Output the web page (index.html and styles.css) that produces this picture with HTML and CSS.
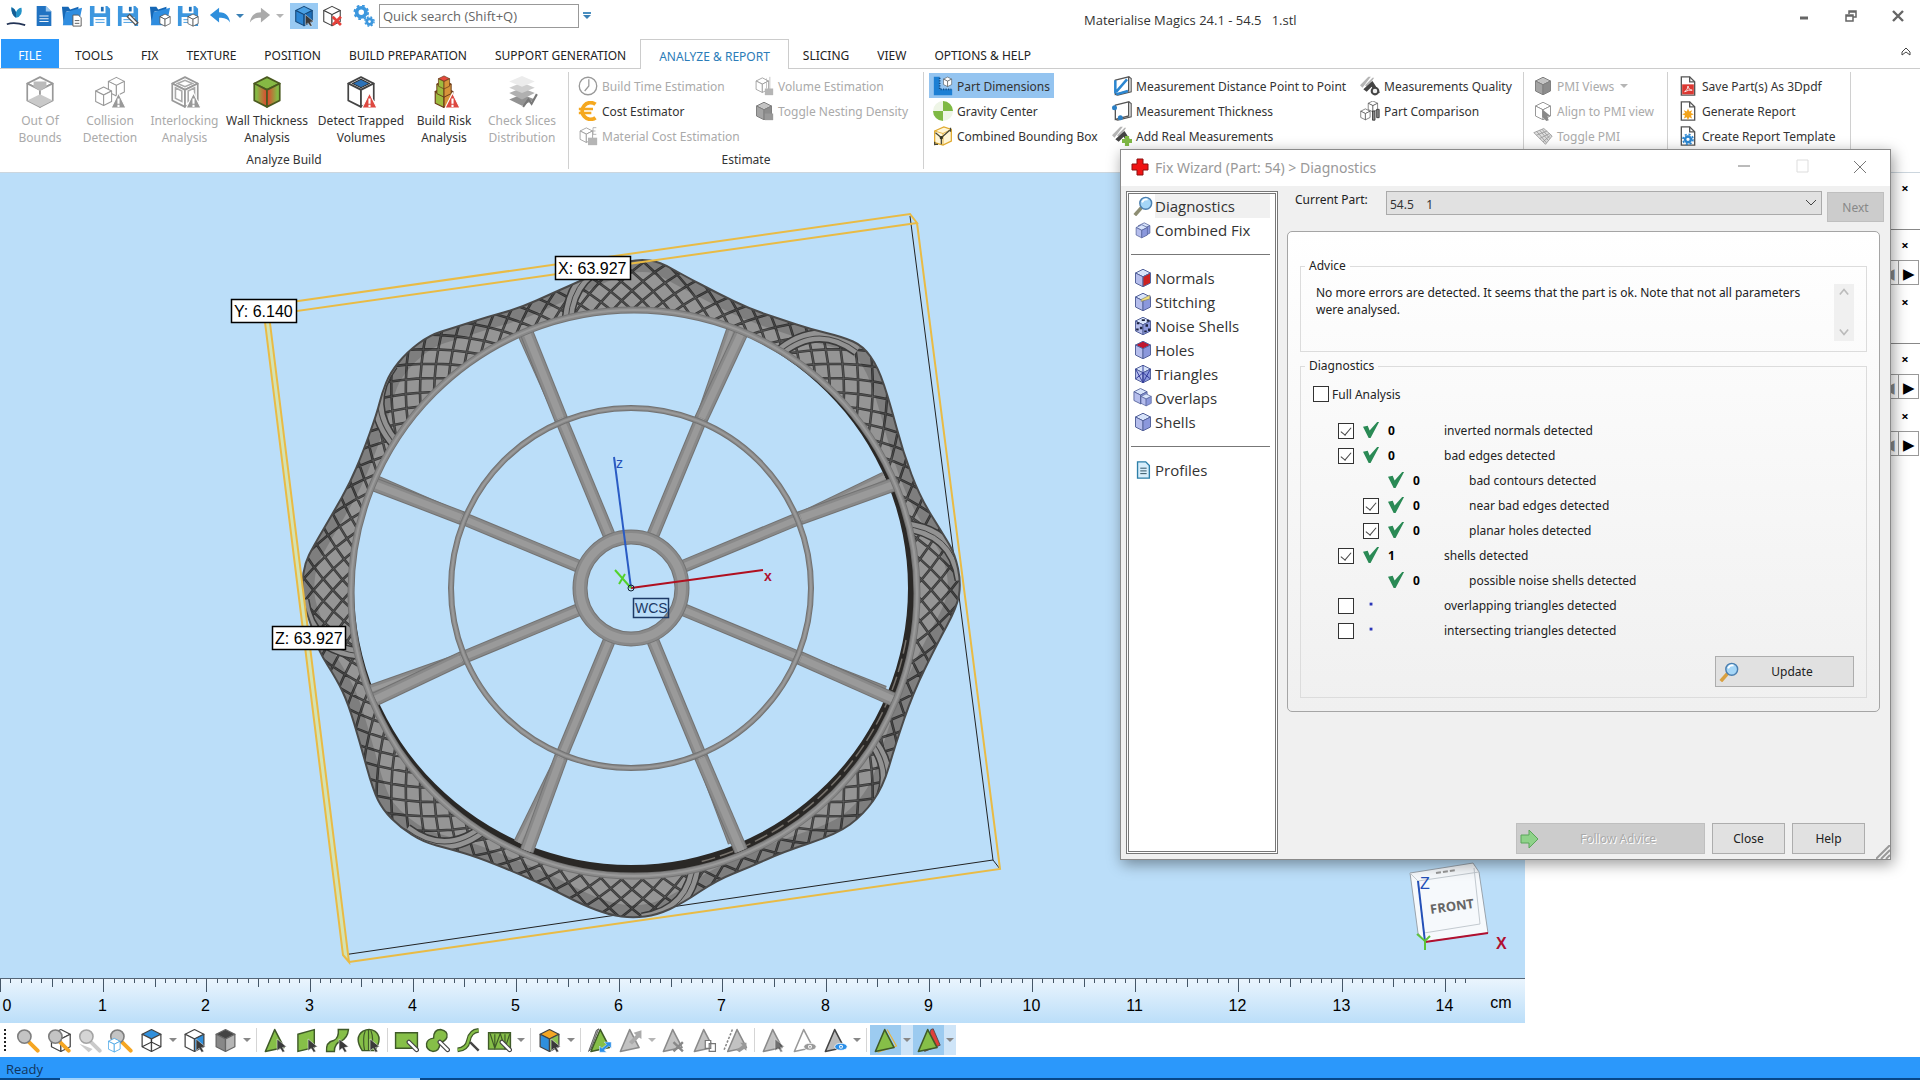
FILE: index.html
```html
<!DOCTYPE html>
<html lang="en">
<head>
    <meta charset="UTF-8">
    <meta name="viewport" content="width=device-width, initial-scale=1.0">
    <title>Materialise Magics 24.1 - 54.5 1.stl</title>
    <link rel="stylesheet" href="styles.css">
</head>
<body>
    <!-- Shared icons -->
    <svg class="defs" aria-hidden="true">
        <symbol id="cube" viewBox="0 0 32 32">
            <path class="ct" d="M16 2 28 8 16 14 4 8z"/><path class="cl" d="M4 8 16 14V30L4 24z"/><path class="cr" d="M28 8 16 14V30L28 24z"/>
        </symbol>
        <symbol id="warn" viewBox="0 0 32 32"><path d="M24 17 31 31H17z" fill="currentColor" stroke="#fff" stroke-width="1"/><path d="M24 22v5M24 28v2" stroke="#fff" stroke-width="2"/></symbol>
        <symbol id="pointer" viewBox="0 0 32 32"><path d="M18 14 30 24 25 25 28 30 25 31 22 26 18 29z" fill="#3a3a3a" stroke="#fff" stroke-width=".6"/></symbol>
        <symbol id="pen" viewBox="0 0 32 32"><path d="M19 18 29 28" stroke="#444" stroke-width="6" stroke-linecap="round"/><path d="M19 18 29 28" stroke="#fff" stroke-width="3" stroke-linecap="round"/></symbol>
        <symbol id="lens" viewBox="0 0 32 32"><path d="M17 17 29 29" stroke="var(--h,#f5a623)" stroke-width="5" stroke-linecap="round"/><circle cx="12" cy="11" r="8.5" fill="#c4c4c4" stroke="#7d7d7d" stroke-width="2"/></symbol>
        <symbol id="doc" viewBox="0 0 24 24"><path d="M4 1h10l6 6v16H4z" fill="#2173c2"/><path d="M14 1v6h6z" fill="#9cc8ee"/><path d="M7 12h10M7 15h10M7 18h10" stroke="#fff" stroke-width="1"/></symbol>
        <symbol id="folder" viewBox="0 0 24 24"><path d="M1 2h7l2 3 9-3v5H6L3 22z" fill="#1667b5"/><path d="M5 8 23 3 19 22H2z" fill="#2f8de0"/></symbol>
        <symbol id="save" viewBox="0 0 24 24"><path d="M1 1h19l3 3v19H1z" fill="#3d97df"/><path d="M6 1h12v8H6zM5 13h14v10H5z" fill="#fff"/><path d="M13 2h3v5h-3z" fill="#1f6db5"/><path d="M7 16h10M7 19h10" stroke="#3d97df"/></symbol>
        <symbol id="arrow" viewBox="0 0 24 24"><path d="M1 11 11 3v5c8 0 11 5 12 11-3-4-6-5-12-5v5z" fill="currentColor"/></symbol>
        <symbol id="gears" viewBox="0 0 24 24"><circle cx="9" cy="8" r="5" fill="none" stroke="#3c97de" stroke-width="4"/><circle cx="9" cy="8" r="7.5" fill="none" stroke="#3c97de" stroke-width="2" stroke-dasharray="3 3"/><circle cx="18" cy="18" r="3" fill="none" stroke="#3c97de" stroke-width="3"/><circle cx="18" cy="18" r="5" fill="none" stroke="#3c97de" stroke-width="1.5" stroke-dasharray="2 2"/></symbol>
        <symbol id="report" viewBox="0 0 24 24"><path d="M4 1h10l6 6v16H4z" fill="#fff" stroke="#555" stroke-width="1.6"/><path d="M14 1v6h6" fill="none" stroke="#555" stroke-width="1.6"/></symbol>
        <symbol id="caliper" viewBox="0 0 24 24"><path d="M0 11 10 1h3L3 14zM6 11 15 2h2l-8 12z" fill="#b5b5b5"/><path d="M4 16 15 6l9 14h-6l-4-7-6 6z" fill="#444"/></symbol>
        <symbol id="plate" viewBox="0 0 24 24"><path d="M4 5 20 1v17L4 22z" fill="#fff" stroke="#555" stroke-width="1.6"/><path d="M20 1l3 2v16l-16 4-3-1" fill="none" stroke="#555" stroke-width="1.4"/></symbol>
        <symbol id="tick" viewBox="0 0 18 18"><path d="M0 5 5 4 7 9 15 0h2L8 17H6z" fill="#2a8a55"/></symbol>
        <symbol id="glass" viewBox="0 0 22 22"><path d="M10 12 2 21" stroke="var(--h,#8d8d72)" stroke-width="4"/><circle cx="14" cy="8" r="6.5" fill="#a5d6f7" stroke="#4b7fb0" stroke-width="1.6"/><path d="M10 7q2-4 6-3" stroke="#fff" stroke-width="2" fill="none"/></symbol>
        <symbol id="tri" viewBox="0 0 32 32"><path d="M15 2 27 25 3 30z" fill="var(--f,#86bf48)" stroke="var(--s,#3f5a28)" stroke-width="2" stroke-linejoin="round"/></symbol>
        <symbol id="eye" viewBox="0 0 32 32"><ellipse cx="23" cy="24" rx="8" ry="4.5" fill="currentColor" stroke="#fff"/><circle cx="23" cy="24" r="2.5" fill="#fff"/><circle cx="23" cy="24" r="1.2" fill="currentColor"/></symbol>
    </svg>

    <header class="titlebar">
        <div class="quick">
            <button class="q" aria-label="Magics"><svg viewBox="0 0 24 24"><path d="M7 2q-1 8 5 12 8-2 6-11-4 0-6 5-1-4-5-6z" fill="#2493c8"/><path d="M7 3q0 8 5 11V8q-1-4-5-5z" fill="#155d94"/><path d="M2 21q8-3 20 1" stroke="#235" stroke-width="2" fill="none"/></svg></button>
            <button class="q" aria-label="New"><svg><use href="#doc"/></svg></button>
            <button class="q" aria-label="Open"><svg viewBox="0 0 24 24"><use href="#folder"/><path d="M13 11h6l3 3v9h-9z" fill="#fff" stroke="#555"/><path d="M15 17h5M15 20h5" stroke="#555"/></svg></button>
            <button class="q" aria-label="Save"><svg><use href="#save"/></svg></button>
            <button class="q" aria-label="Save as"><svg viewBox="0 0 24 24"><use href="#save"/><path d="m12 11 10 10" stroke="#555" stroke-width="5"/><path d="m13 12 8 8" stroke="#fff" stroke-width="2"/></svg></button>
            <i class="sep"></i>
            <button class="q" aria-label="Load part"><svg viewBox="0 0 24 24"><use href="#folder"/><use href="#cube" class="wire" x="10" y="9" width="15" height="15"/></svg></button>
            <button class="q" aria-label="Save part"><svg viewBox="0 0 24 24"><use href="#save"/><use href="#cube" class="wire" x="10" y="9" width="15" height="15"/></svg></button>
            <i class="sep"></i>
            <button class="q undo" aria-label="Undo"><svg><use href="#arrow"/></svg></button><i class="caret blue"></i>
            <button class="q redo" aria-label="Redo"><svg class="flip"><use href="#arrow"/></svg></button><i class="caret pale"></i>
            <i class="sep"></i>
            <button class="q on" aria-label="Select parts"><svg class="solid-blue" viewBox="0 0 32 32"><use href="#cube"/><use href="#pointer"/></svg></button>
            <button class="q" aria-label="Unload part"><svg class="wire" viewBox="0 0 32 32"><use href="#cube"/><path d="m17 17 12 12M29 17 17 29" stroke="#e5413a" stroke-width="4"/></svg></button>
            <i class="sep"></i>
            <button class="q" aria-label="Settings"><svg><use href="#gears"/></svg></button>
            <input class="search" type="text" placeholder="Quick search (Shift+Q)" aria-label="Quick search">
            <button class="more" aria-label="Customize"><i class="caret blue"></i></button>
        </div>
        <h1 class="title">Materialise Magics 24.1 - 54.5 &nbsp; 1.stl</h1>
        <div class="winbtns">
            <button aria-label="Minimize"><svg viewBox="0 0 16 16"><path d="M4 10h8" stroke-width="3"/></svg></button>
            <button aria-label="Restore"><svg viewBox="0 0 16 16"><path d="M3 7h7v6H3zM3 8h7M6 6V3h7v6h-3M6 4h7" stroke-width="1.5" fill="none"/></svg></button>
            <button aria-label="Close window"><svg viewBox="0 0 16 16"><path d="m3 3 10 10M13 3 3 13" stroke-width="2.4"/></svg></button>
        </div>
    </header>

    <nav class="tabs">
        <button class="tab file">FILE</button>
        <button class="tab">TOOLS</button>
        <button class="tab">FIX</button>
        <button class="tab">TEXTURE</button>
        <button class="tab">POSITION</button>
        <button class="tab">BUILD PREPARATION</button>
        <button class="tab">SUPPORT GENERATION</button>
        <button class="tab active">ANALYZE &amp; REPORT</button>
        <button class="tab">SLICING</button>
        <button class="tab">VIEW</button>
        <button class="tab">OPTIONS &amp; HELP</button>
        <button class="collapse" aria-label="Collapse ribbon"><svg viewBox="0 0 12 12"><path d="M2 9V6l4-4 4 4v3L6 6z" fill="none" stroke="#444"/></svg></button>
    </nav>

    <section class="ribbon">
        <div class="group build">
            <div class="bigs">
                <button class="big" disabled><svg class="wire dim" viewBox="0 0 32 32"><use href="#cube"/><path d="M16 18 28 24 16 30 4 24z" fill="#c9c9c9"/><path d="M10 6h12v5l-6 4-6-4z" fill="#bbb"/></svg><span>Out Of<br>Bounds</span></button>
                <button class="big" disabled><svg class="wire dim" viewBox="0 0 32 32"><use href="#cube" x="12" y="0" width="20" height="22"/><use href="#cube" x="0" y="9" width="20" height="22"/><use href="#warn" color="#999"/></svg><span>Collision<br>Detection</span></button>
                <button class="big" disabled><svg class="wire dim" viewBox="0 0 32 32"><use href="#cube"/><path d="M7 12l6 3v10l-6-3zM25 12l-6 3v10l6-3zM9 8l7-3 7 3-7 3z" fill="none" stroke="#aaa" stroke-width="1.5"/><use href="#warn" color="#999"/></svg><span>Interlocking<br>Analysis</span></button>
                <button class="big"><svg class="heat" viewBox="0 0 32 32">
                    <defs>
                        <linearGradient id="hl" x1="0" x2="1"><stop offset=".2" stop-color="#86b944"/><stop offset="1" stop-color="#e0442f"/></linearGradient>
                        <linearGradient id="hr" x1="1" x2="0"><stop offset=".2" stop-color="#86b944"/><stop offset="1" stop-color="#e0442f"/></linearGradient>
                    </defs>
                    <use href="#cube"/></svg><span>Wall Thickness<br>Analysis</span></button>
                <button class="big"><svg class="wire" viewBox="0 0 32 32"><use href="#cube"/><path d="M16 4 24 8 16 12 8 8z" fill="#2c72b8" stroke="#333"/><use href="#warn" color="#dd4840"/></svg><span>Detect Trapped<br>Volumes</span></button>
                <button class="big"><svg class="risk" viewBox="0 0 32 32"><use href="#cube" x="2" y="10" width="28" height="22"/><use href="#cube" x="6" y="4" width="20" height="18"/><use href="#cube" class="redtop" x="9" y="0" width="14" height="14"/><use href="#warn" color="#dd4840"/></svg><span>Build Risk<br>Analysis</span></button>
                <button class="big" disabled><svg viewBox="0 0 32 32"><path d="m4 23 12-5 12 5-12 6z" fill="#929292"/><path d="m4 17 12-5 12 5-12 6z" fill="#b0b0b0"/><path d="m4 12 12-5 12 5-12 5z" fill="#cfcfcf"/><path d="m4 6 12-5 12 5-12 5z" fill="#ececec"/><path d="m17 30 5-7 3 4 5-9" stroke="#777" stroke-width="2" fill="none"/></svg><span>Check Slices<br>Distribution</span></button>
            </div>
            <div class="caption">Analyze Build</div>
        </div>
        <div class="group estimate">
            <div class="smalls">
                <button class="small" disabled><svg viewBox="0 0 24 24"><circle cx="12" cy="12" r="10.5" fill="#fff" stroke="#999" stroke-width="1.6"/><path d="M13 4v8l-5 6" stroke="#999" stroke-width="1.5" fill="none"/></svg>Build Time Estimation</button>
                <button class="small" disabled><svg class="wire dim" viewBox="0 0 24 24"><use href="#cube" width="20" height="22"/><path d="M15 3v12M19 1v16" stroke="#bbb"/><path d="M13 15h10v8H13z" fill="#b5b5b5"/></svg>Volume Estimation</button>
                <button class="small"><svg viewBox="0 0 24 24"><path d="M21 4A10 10 0 1 0 21 20" fill="none" stroke="#f5a81f" stroke-width="4.5"/><path d="M1 9.500h17M1 14.500h15" stroke="#f5a81f" stroke-width="3"/></svg>Cost Estimator</button>
                <button class="small" disabled><svg class="grey" viewBox="0 0 24 24"><use href="#cube"/><path d="M13 15h10v8H13z" fill="#999"/></svg>Toggle Nesting Density</button>
                <button class="small" disabled><svg class="wire dim" viewBox="0 0 24 24"><use href="#cube" width="20" height="22"/><path d="M22 2h-4v8h4M16 6h5" fill="none" stroke="#aaa"/><path d="M12 14h11v9H12z" fill="#b5b5b5"/></svg>Material Cost Estimation</button>
            </div>
            <div class="caption">Estimate</div>
        </div>
        <div class="group measure">
            <div class="smalls">
                <button class="small on"><svg viewBox="0 0 24 24"><path d="M1 1h7v15h15v7H1z" fill="#1c7fd4"/><path d="M8 2v14h14" fill="none" stroke="#124e88" stroke-width="2" stroke-dasharray="1.500 1.500"/><use href="#cube" class="wire" x="11" y="0" width="13" height="14"/></svg>Part Dimensions</button>
                <button class="small"><svg viewBox="0 0 24 24"><use href="#plate"/><path d="M5 19 18 4M4 21V5M5 22 19 18" stroke="#2b86d0" stroke-width="3"/></svg>Measurement Distance Point to Point</button>
                <button class="small"><svg viewBox="0 0 24 24"><use href="#caliper"/><circle cx="18" cy="18" r="4" fill="#eee" stroke="#444" stroke-width="2.500"/></svg>Measurements Quality</button>
                <button class="small"><svg viewBox="0 0 24 24"><path d="M12 12V0A12 12 0 0 1 24 12zM12 12v12A12 12 0 0 1 0 12z" fill="#7fb944"/><path d="M12 12H0A12 12 0 0 1 12 0zM12 12h12a12 12 0 0 1-12 12z" fill="#eef5e6"/></svg>Gravity Center</button>
                <button class="small"><svg viewBox="0 0 24 24"><use href="#plate"/><circle cx="3" cy="8" r="3" fill="#2b7fc4"/><circle cx="10" cy="20" r="3" fill="#2b7fc4"/></svg>Measurement Thickness</button>
                <button class="small"><svg class="wire" viewBox="0 0 24 24"><use href="#cube" x="8" y="-1" width="15" height="15"/><use href="#cube" x="-1" y="8" width="15" height="16"/><path d="M15 12h3v11h-3zM20 10h3v10h-3z" fill="#888" stroke="#333"/></svg>Part Comparison</button>
                <button class="small"><svg viewBox="0 0 24 24"><path d="M2 6 13 1l9 3v14l-10 5-10-3z" fill="#fff6d8" stroke="#e0a92e" stroke-width="1.500"/><path d="M2 6l10 3 10-5M12 9v14" stroke="#e0a92e" fill="none"/><path d="M2 22h4M2 23v-4M3 8l7 6 10-9M10 14v8M21 2v5" stroke="#443" fill="none" stroke-width="1.500"/><circle cx="10" cy="14" r="2" fill="#332"/></svg>Combined Bounding Box</button>
                <button class="small"><svg viewBox="0 0 24 24"><use href="#caliper"/><path d="M18 12v12M12 18h12" stroke="#7fb944" stroke-width="5"/></svg>Add Real Measurements</button>
            </div>
        </div>
        <div class="group pmi">
            <div class="smalls">
                <button class="small" disabled><svg class="grey" viewBox="0 0 24 24"><use href="#cube"/></svg>PMI Views <i class="caret pale"></i></button>
                <button class="small" disabled><svg class="wire dim" viewBox="0 0 24 24"><use href="#cube"/><path d="M11 10 21 18l-4 1 2 4-3 1-5-5z" fill="#888"/></svg>Align to PMI view</button>
                <button class="small" disabled><svg viewBox="0 0 24 24"><path d="m1 8 12-5 10 9-8 10z" fill="#ddd" stroke="#999"/><path d="m4 6 12 14M8 5l10 12M11 4l9 11M4 11l13-5M8 15l12-6M12 19l9-8" stroke="#999"/></svg>Toggle PMI</button>
            </div>
        </div>
        <div class="group report">
            <div class="smalls">
                <button class="small"><svg viewBox="0 0 24 24"><use href="#report"/><path d="M5 10h14v12H5z" fill="#dc3832"/><path d="M8 19q4-3 4-7 1 5 5 5-4-1-9 2" stroke="#fff" fill="none"/></svg>Save Part(s) As 3Dpdf</button>
                <button class="small"><svg viewBox="0 0 24 24"><use href="#report"/><path d="m12 9 1.500 3.500L17 11l-1.500 3.500L19 16l-3.500 1.500L17 21l-3.500-1.500L12 23l-1.500-3.500L7 21l1.500-3.500L5 16l3.500-1.500L7 11l3.500 1.500z" fill="#f3a41c"/></svg>Generate Report</button>
                <button class="small"><svg viewBox="0 0 24 24"><use href="#report"/><circle cx="12" cy="16" r="3.500" fill="none" stroke="#2b86d0" stroke-width="3"/><circle cx="12" cy="16" r="6" fill="none" stroke="#2b86d0" stroke-width="2" stroke-dasharray="2.500 2.200"/></svg>Create Report Template</button>
            </div>
        </div>
    </section>

    <main class="workspace">
        <div class="stage">
            <svg class="view" viewBox="0 173 1525 805" preserveAspectRatio="xMinYMin meet" role="img" aria-label="Part view">
                <defs><clipPath id="rimClip"><path id="rimShape"/></clipPath></defs>
                <path d="M910 216 993 860 343 955M993 860 1000 869" class="hair"/>
                <!-- wheel, filled in by script.js -->
                <g id="wall"></g>
                <g id="spokes"></g>
                <g id="wheel"></g>
                <path d="M263 306 269 315 349 962 343 955z" class="band"/>
                <path d="M263 306 910 214 917 223 269 315zM263 306 343 955 349 962 269 315M917 223 1000 869 349 962" class="bbox"/>
                <path d="M631 588 614 457" stroke="#2a5bc4" stroke-width="2"/>
                <path d="M631 588 763 570" stroke="#b01020" stroke-width="2"/>
                <path d="M631 588 615 570M619 584l6-10" stroke="#52d22c" stroke-width="2"/>
                <circle cx="631" cy="588" r="3" fill="none" stroke="#123"/>
                <text x="616" y="468" class="axis z">z</text>
                <text x="764" y="581" class="axis x">x</text>
                <rect x="633.5" y="598.5" width="35" height="19" class="wcsbox"/>
                <text x="635" y="613" class="axis wcs">WCS</text>
                <rect x="555.500" y="256.500" width="75" height="23" class="tag"/><text x="558" y="274" class="dim-text">X: 63.927</text>
                <rect x="231.500" y="299.500" width="65" height="23" class="tag"/><text x="234" y="317" class="dim-text">Y: 6.140</text>
                <rect x="272.500" y="626.500" width="73" height="23" class="tag"/><text x="275" y="644" class="dim-text">Z: 63.927</text>
                <!-- orientation cube -->
                <path d="M1410 873 1473 863 1479 872 1488 933 1425 942 1418 933z" fill="#f6f9fc" stroke="#9aa4ad"/>
                <path d="M1410 873 1418 881 1479 872M1418 881l7 61M1424 933l56-9-6-56" fill="none" stroke="#c3cad0"/>
                <path d="M1436 873l20-3" stroke="#999" stroke-width="2" stroke-dasharray="5 2"/>
                <path d="M1418 881 1425 942" stroke="#2450b8" stroke-width="2"/><path d="M1425 942 1488 933" stroke="#b01030" stroke-width="2"/><path d="M1417 934l8 7 5-5M1425 941v9" stroke="#5cc43a" stroke-width="2" fill="none"/>
                <text x="1452" y="911" class="face" transform="rotate(-8 1452 906)">FRONT</text>
                <text x="1420" y="889" class="nav z">Z</text><text x="1496" y="949" class="nav x">X</text>
            </svg>
            <div class="ruler"><svg id="ruler"></svg></div>
        </div>
        <aside class="dock">
            <div class="pane line"><button class="x" aria-label="Close pane">×</button></div>
            <div class="pane"><button class="x" aria-label="Close pane">×</button><div class="scroll"><button disabled aria-label="Previous">◀</button><button aria-label="Next tab">▶</button></div></div>
            <div class="pane line"><button class="x" aria-label="Close pane">×</button></div>
            <div class="pane"><button class="x" aria-label="Close pane">×</button><div class="scroll"><button disabled aria-label="Previous">◀</button><button aria-label="Next tab">▶</button></div></div>
            <div class="pane"><button class="x" aria-label="Close pane">×</button><div class="scroll"><button disabled aria-label="Previous">◀</button><button aria-label="Next tab">▶</button></div></div>
        </aside>
    </main>

    <footer class="marks">
        <i class="grip-dots"></i>
        <button class="m" aria-label="Zoom"><svg><use href="#lens"/></svg></button>
        <button class="m" aria-label="Zoom part"><svg class="wire" viewBox="0 0 32 32"><use href="#cube" x="3"/><use href="#lens"/></svg></button>
        <button class="m" aria-label="Zoom previous"><svg class="nohandle" viewBox="0 0 32 32"><path d="M3 20l12 11 5-4" fill="#ccc"/><use href="#lens" opacity=".7"/></svg></button>
        <button class="m" aria-label="Zoom selection"><svg viewBox="0 0 32 32"><use href="#lens"/><use href="#cube" class="wire sky" x="-2" y="12" width="20" height="20"/></svg></button>
        <button class="m" aria-label="Views"><svg class="wire bluetop" viewBox="0 0 32 32"><use href="#cube"/><path d="M4 24 16 18 28 24M16 14v4" stroke="#333" fill="none" stroke-width="1.500"/></svg></button><i class="caret"></i>
        <button class="m" aria-label="Pick face"><svg class="wire blueright" viewBox="0 0 32 32"><use href="#cube"/><use href="#pointer"/></svg></button>
        <button class="m" aria-label="Shading"><svg class="shade" viewBox="0 0 32 32"><use href="#cube"/></svg></button><i class="caret"></i>
        <i class="sep"></i>
        <button class="m" aria-label="Mark triangle"><svg viewBox="0 0 32 32"><use href="#tri"/><use href="#pointer"/></svg></button>
        <button class="m" aria-label="Mark plane"><svg viewBox="0 0 32 32"><path d="M5 8 26 2v23L5 30z" class="leaf"/><use href="#pointer"/></svg></button>
        <button class="m" aria-label="Mark surface"><svg viewBox="0 0 32 32"><path d="M2 30q-1-12 9-14 7-3 6-14h13q-1 11-10 15-8 3-8 13z" class="leaf"/><use href="#pointer"/></svg></button>
        <button class="m" aria-label="Mark shell"><svg viewBox="0 0 32 32"><path d="M8 29Q-3 12 9 4q8-4 15 0 11 8 0 25z" class="leaf"/><path d="M11 29q-3-16 1-26M20 29q3-16-1-26M16 2v27" stroke="#3f5a28" fill="none" stroke-width="1.500"/><use href="#pointer"/></svg></button>
        <i class="sep"></i>
        <button class="m" aria-label="Rectangle"><svg viewBox="0 0 32 32"><path d="M2 6h28v20H2z" class="leaf"/><use href="#pen"/></svg></button>
        <button class="m" aria-label="Free form"><svg viewBox="0 0 32 32"><path d="M11 13Q11 2 20 2q10 2 8 10-2 5-9 7 0 11-9 11-9-2-8-10 1-6 9-7z" class="leaf"/><use href="#pen"/></svg></button>
        <button class="m" aria-label="Brush"><svg viewBox="0 0 32 32"><path d="M2 28q12-1 14-12Q18 4 29 3" stroke="#3f5a28" stroke-width="6" fill="none"/><path d="M2 28q12-1 14-12Q18 4 29 3" stroke="#86bf48" stroke-width="3" fill="none"/><path d="m18 18 11 11" stroke="#444" stroke-width="3"/></svg></button>
        <button class="m" aria-label="Strip"><svg viewBox="0 0 32 32"><path d="M2 6h28v21H2z" class="leaf"/><path d="M4 7l6 19 7-19 6 19 6-18M10 26V8M23 8v18" stroke="#3f5a28" stroke-width="1.500" fill="none"/><use href="#pen"/></svg></button><i class="caret"></i>
        <i class="sep"></i>
        <button class="m" aria-label="Color part"><svg class="tricolor" viewBox="0 0 32 32"><use href="#cube"/><use href="#pointer"/></svg></button><i class="caret"></i>
        <i class="sep"></i>
        <button class="m" aria-label="Flip marked"><svg viewBox="0 0 32 32"><path d="M12 3 15 1 5 27l-3 3z" fill="#aaa" stroke="#444"/><use href="#tri" x="2"/><path d="M16 31v-8l3 3 6-5-3-3h9v8l-3-3-6 5 3 3z" fill="#2b8fe8" stroke="#fff" stroke-width=".6"/></svg></button>
        <button class="m" aria-label="Flip"><svg class="tri-grey" viewBox="0 0 32 32"><use href="#tri"/><path d="m14 18 9-9-3-3 10-3v11l-3-2-9 9z" fill="#aaa"/></svg></button><i class="caret pale"></i>
        <button class="m" aria-label="Delete marked"><svg class="tri-grey" viewBox="0 0 32 32"><use href="#tri"/><path d="m16 18 12 12M28 18 16 30" stroke="#888" stroke-width="3"/></svg></button>
        <button class="m" aria-label="Copy marked"><svg class="tri-grey" viewBox="0 0 32 32"><use href="#tri"/><path d="M17 16h7v10h-7zM22 20h8v10h-8z" fill="#fff" stroke="#777" stroke-width="1.500"/></svg></button>
        <button class="m" aria-label="Separate marked"><svg class="tri-grey" viewBox="0 0 32 32"><path d="M12 2 1 29" stroke="#888" stroke-dasharray="3 2" stroke-width="2"/><use href="#tri" x="3"/><path d="m17 28 8-6-3-3h8v10l-3-2-6 4z" fill="#999"/></svg></button>
        <i class="sep"></i>
        <button class="m" aria-label="Pick triangle"><svg class="tri-grey" viewBox="0 0 32 32"><use href="#tri"/><use href="#pointer" opacity=".6"/></svg></button>
        <button class="m" aria-label="Show"><svg class="tri-white" viewBox="0 0 32 32"><use href="#tri"/><use href="#eye" color="#999"/></svg></button>
        <button class="m" aria-label="Show marked"><svg class="tri-dark" viewBox="0 0 32 32"><use href="#tri"/><use href="#eye" color="#2b8fe8"/></svg></button><i class="caret"></i>
        <i class="sep"></i>
        <button class="m on" aria-label="Highlight marked"><svg viewBox="0 0 32 32"><path d="M18 2 30 23 6 31" fill="none" stroke="#e8b33a" stroke-width="1.500"/><use href="#tri"/></svg></button><i class="caret lit"></i>
        <button class="m on" aria-label="Highlight back"><svg viewBox="0 0 32 32"><path d="M19 2l3-1 9 21-20 8z" fill="#e0403a" stroke="#444"/><use href="#tri"/></svg></button><i class="caret lit"></i>
    </footer>
    <div class="status">Ready</div>
    <div class="strip"><i></i></div>

    <section class="dialog" role="dialog" aria-label="Fix Wizard">
        <div class="dlg-title">
            <svg viewBox="0 0 18 18"><path d="M6 1h6v5h5v6h-5v5H6v-5H1V6h5z" fill="#f01414" stroke="#8c1010"/></svg>
            <h2>Fix Wizard (Part: 54) &gt; Diagnostics</h2>
            <button aria-label="Minimize dialog"><svg viewBox="0 0 16 16"><path d="M2 7h12"/></svg></button>
            <button disabled aria-label="Maximize dialog"><svg viewBox="0 0 16 16"><path d="M3 1h11v12H3z"/></svg></button>
            <button aria-label="Close dialog"><svg viewBox="0 0 16 16"><path d="m2 2 12 12M14 2 2 14"/></svg></button>
        </div>
        <div class="dlg-body">
            <nav class="pages">
                <a href="#" class="page sel"><svg viewBox="0 0 22 22"><use href="#glass"/></svg><span>Diagnostics</span></a>
                <a href="#" class="page"><svg class="lilac" viewBox="0 0 32 32"><use href="#cube" x="6" y="2" width="24" height="26"/><use href="#cube" x="2" y="5" width="24" height="26"/></svg><span>Combined Fix</span></a>
                <hr>
                <a href="#" class="page"><svg class="lilac redface" viewBox="0 0 32 32"><use href="#cube"/></svg><span>Normals</span></a>
                <a href="#" class="page"><svg class="lilac" viewBox="0 0 32 32"><use href="#cube"/><path d="M13 12 27 5v6l-14 4z" fill="#f5e27a" stroke="#776"/></svg><span>Stitching</span></a>
                <a href="#" class="page"><svg class="lilac" viewBox="0 0 32 32"><use href="#cube"/><path d="M6 10h4v3H6zM11 17h4v4h-4zM5 20h4v3H5zM14 5h5v3h-5zM20 13h4v4h-4zM24 20h4v4h-4zM18 23h4v3h-4zM22 6h4v3h-4z" fill="#1c2340"/></svg><span>Noise Shells</span></a>
                <a href="#" class="page"><svg class="lilac redroof" viewBox="0 0 32 32"><use href="#cube"/></svg><span>Holes</span></a>
                <a href="#" class="page"><svg class="lilac" viewBox="0 0 32 32"><use href="#cube"/><path d="M4 8 16 30 28 8M16 2v28M4 24 16 14M16 14 28 24" stroke="#30389a" fill="none" stroke-width="1.500"/></svg><span>Triangles</span></a>
                <a href="#" class="page"><svg class="lilac" viewBox="0 0 32 32"><use href="#cube" x="-2" y="-2" width="28" height="30"/><use href="#cube" x="10" y="6" width="22" height="26"/></svg><span>Overlaps</span></a>
                <a href="#" class="page"><svg class="lilac" viewBox="0 0 32 32"><use href="#cube"/></svg><span>Shells</span></a>
                <hr>
                <a href="#" class="page"><svg viewBox="0 0 22 22"><path d="M5 2h9l4 4v14H5z" fill="#d8eefb" stroke="#2d7fa8" stroke-width="1.500"/><path d="M8 9h7M8 12h7M8 15h7" stroke="#245" /></svg><span>Profiles</span></a>
            </nav>
            <div class="content">
                <div class="part-row">
                    <label for="part">Current Part:</label>
                    <div class="select"><select id="part"><option>54.5 &nbsp;&nbsp; 1</option></select><svg viewBox="0 0 12 12"><path d="m1 3 5 5 5-5"/></svg></div>
                    <button class="btn next" disabled>Next</button>
                </div>
                <div class="card">
                    <fieldset class="advice">
                        <legend>Advice</legend>
                        <p>No more errors are detected. It seems that the part is ok. Note that not all parameters were analysed.</p>
                        <div class="bar"><button disabled aria-label="Scroll up"><svg viewBox="0 0 12 12"><path d="m1 9 5-6 5 6"/></svg></button><button disabled aria-label="Scroll down"><svg viewBox="0 0 12 12"><path d="m1 3 5 6 5-6"/></svg></button></div>
                    </fieldset>
                    <fieldset class="diag">
                        <legend>Diagnostics</legend>
                        <label class="full"><input type="checkbox">Full Analysis</label>
                        <label class="row"><input type="checkbox" checked><svg><use href="#tick"/></svg><b>0</b>inverted normals detected</label>
                        <label class="row"><input type="checkbox" checked><svg><use href="#tick"/></svg><b>0</b>bad edges detected</label>
                        <div class="row sub"><i></i><svg><use href="#tick"/></svg><b>0</b>bad contours detected</div>
                        <label class="row sub"><input type="checkbox" checked><svg><use href="#tick"/></svg><b>0</b>near bad edges detected</label>
                        <label class="row sub"><input type="checkbox" checked><svg><use href="#tick"/></svg><b>0</b>planar holes detected</label>
                        <label class="row"><input type="checkbox" checked><svg><use href="#tick"/></svg><b>1</b>shells detected</label>
                        <div class="row sub"><i></i><svg><use href="#tick"/></svg><b>0</b>possible noise shells detected</div>
                        <label class="row"><input type="checkbox"><svg viewBox="0 0 18 18"><path d="M7 6h3v3H7z" fill="#2a35b8"/></svg><b></b>overlapping triangles detected</label>
                        <label class="row"><input type="checkbox"><svg viewBox="0 0 18 18"><path d="M7 6h3v3H7z" fill="#2a35b8"/></svg><b></b>intersecting triangles detected</label>
                        <button class="btn update"><svg viewBox="0 0 22 22"><use href="#glass"/></svg><span>Update</span></button>
                    </fieldset>
                </div>
                <div class="actions">
                    <button class="btn follow" disabled><svg viewBox="0 0 20 20"><path d="M1 6h8V1l9 9-9 9v-5H1z" fill="#8fd28a" stroke="#5ba65a"/></svg><span>Follow Advice</span></button>
                    <button class="btn">Close</button>
                    <button class="btn">Help</button>
                </div>
            </div>
        </div>
        <svg class="grip" viewBox="0 0 14 14"><path d="M0 14 14 0M5 14l9-9M10 14l4-4" stroke="#999" stroke-width="2"/></svg>
    </section>

    <script src="script.js"></script>
</body>
</html>
```

FILE: styles.css
```css
* {
    box-sizing: border-box;
}

body {
    margin: 0;
    height: 100vh;
    display: flex;
    flex-direction: column;
    overflow: hidden;
    position: relative;
    font-family: "Open Sans", "Noto Sans", sans-serif;
    font-size: 13px;
    color: #333;
    background: #fff;
}

button {
    font: inherit;
    color: inherit;
    background: none;
    border: 0;
    padding: 0;
}

h1, h2, p {
    margin: 0;
    font-size: inherit;
    font-weight: normal;
}

.defs {
    position: absolute;
    width: 0;
    height: 0;
}

/* Cube faces */
.ct { fill: var(--t, #fff); }
.cl { fill: var(--l, #fff); }
.cr { fill: var(--r, #fff); }
.ct, .cl, .cr {
    stroke: var(--e, #444);
    stroke-width: 1.6px;
    stroke-linejoin: round;
}
.dim { --e: #999; }
.sky { --e: #3fa2e6; }
.solid-blue { --t: #4aa0e4; --l: #2d86d4; --r: #1d6fba; --e: #174a7c; }
.heat { --t: #86b944; --l: url(#hl); --r: url(#hr); --e: #4b5a20; }
.risk { --t: #e9b53c; --l: #9dbb3f; --r: #d6943a; --e: #6b3a1a; }
.redtop { --t: #e5483c; }
.grey { --t: #c4c4c4; --l: #a4a4a4; --r: #8c8c8c; --e: #808080; }
.bluetop { --t: #2f8fdc; }
.blueright { --r: #2f8fdc; }
.shade { --t: #444; --l: #888; --r: #b5b5b5; --e: #666; }
.tricolor { --t: #f5a623; --l: #2f8fdc; --r: #8cc152; }
.lilac { --t: #d8e4fa; --l: #b5bdec; --r: #8b98dc; --e: #56649c; }
.redface { --r: #cc2222; }
.redroof { --t: #c01830; }
.nohandle { --h: #b5b5b5; }
.tri-grey { --f: #c2c2c2; --s: #8a8a8a; }
.tri-white { --f: #fff; --s: #999; }
.tri-dark { --f: #bbb; --s: #444; }
.leaf {
    fill: #86bf48;
    stroke: #3f5a28;
    stroke-width: 1.8px;
}

.caret {
    width: 12px;
    display: inline-flex;
    align-self: stretch;
    align-items: center;
    justify-content: center;
}
.caret::after {
    content: "";
    border: 4px solid transparent;
    border-top-color: #888;
    border-bottom: 0;
}
.caret.blue::after { border-top-color: #3a80b5; }
.caret.pale::after { border-top-color: #b5b5b5; }

/* Title bar */
.titlebar {
    height: 36px;
    flex: none;
    display: flex;
    align-items: flex-start;
}
.quick {
    display: flex;
    align-items: center;
    height: 32px;
    padding-left: 2px;
}
.q {
    width: 28px;
    height: 26px;
    display: flex;
    align-items: center;
    justify-content: center;
}
.q svg {
    width: 22px;
    height: 22px;
}
.q.on { background: #99caf3; }
.quick .sep { width: 4px; }
.undo { color: #2f8fdc; }
.redo { color: #aaa; }
.flip { transform: scaleX(-1); }
.search {
    width: 200px;
    height: 24px;
    margin-left: 1px;
    padding: 0 3px;
    border: 1px solid #999;
    font: inherit;
    color: #555;
}
.search::placeholder { color: #666; }
.more {
    width: 8px;
    height: 8px;
    margin-left: 4px;
    border-top: 2px solid #4a8fc0;
    display: flex;
    justify-content: center;
}
.title {
    flex: 1;
    padding-top: 11px;
    padding-left: 493px;
    line-height: 18px;
    white-space: nowrap;
}
.winbtns { display: flex; padding: 8px 14px 0 0; }
.winbtns button { width: 16px; margin-left: 31px; }
.winbtns svg { width: 16px; height: 16px; stroke: #666; display: block; }

/* Tabs */
.tabs, .ribbon, .dialog {
    font-family: "Noto Sans", sans-serif;
    font-size: 12px;
}
.tabs {
    height: 33px;
    flex: none;
    display: flex;
    align-items: stretch;
    padding-top: 3px;
    border-bottom: 1px solid #ccc;
}
.tab {
    padding: 3px 14px 0;
    color: #222;
    white-space: nowrap;
}
.tab.file {
    width: 58px;
    margin: 0 2px 0 1px;
    background: #2b98fb;
    color: #fff;
}
.tab.active {
    padding: 3px 18px 0;
    margin-bottom: -1px;
    background: #fff;
    border: 1px solid #ccc;
    border-bottom: 0;
    color: #2b7cb8;
}
.collapse { margin-left: auto; width: 28px; }
.collapse svg { width: 12px; height: 12px; }

/* Ribbon */
.ribbon {
    height: 104px;
    flex: none;
    display: flex;
    border-bottom: 1px solid #ccd6de;
}
.group {
    display: flex;
    flex-direction: column;
    margin: 3px 0;
    border-right: 1px solid #d0d0d0;
}
.caption {
    text-align: center;
    line-height: 18px;
    margin-top: auto;
}
.bigs {
    display: grid;
    grid-template-columns: 70px 70px 79px 86px 102px 64px 92px;
    padding-left: 5px;
}
.big {
    display: flex;
    flex-direction: column;
    align-items: center;
    line-height: 17px;
    white-space: nowrap;
    padding-top: 3px;
}
.big svg { width: 34px; height: 34px; margin-bottom: 3px; }
.big:disabled, .small:disabled { color: #aaa; }
.smalls {
    display: grid;
    grid-template-rows: 25px 25px 25px;
    padding: 1px 5px 0;
}
.estimate .smalls { grid-template-columns: 176px 168px; }
.measure .smalls { grid-template-columns: 179px 248px 162px; }
.pmi .smalls { padding-right: 0; grid-template-columns: 138px; }
.report .smalls { padding-left: 6px; grid-template-columns: 171px; }
.small {
    display: flex;
    align-items: center;
    justify-self: start;
    gap: 4px;
    padding: 1px 4px 0;
    white-space: nowrap;
}
.small svg { width: 20px; height: 20px; flex: none; }
.small.on { background: #94c4f0; }

/* Workspace */
.workspace {
    flex: 1;
    min-height: 0;
    display: flex;
}
.stage {
    flex: 1;
    display: flex;
    flex-direction: column;
    min-width: 0;
    background: #bbdef9;
}
.view {
    flex: 1;
    min-height: 0;
    width: 100%;
    display: block;
}
.ruler {
    height: 45px;
    border-top: 1px solid #567;
    background: linear-gradient(#eaf4fd, #bbdef9);
}
.ruler svg { width: 100%; height: 44px; display: block; }
.ruler text {
    font: 16px "Liberation Sans", Arial, sans-serif;
    fill: #000;
    text-anchor: middle;
}
.ruler path { stroke: #456; }

.bbox { fill: none; stroke: #e9bb45; stroke-width: 2px; }
.band { fill: #d3e3b4; }
.hair { fill: none; stroke: #222; }
.tag { fill: #fff; stroke: #000; stroke-width: 1.5px; }
.dim-text { font: 16px "Liberation Sans", Arial, sans-serif; fill: #000; }
.axis { font: 14px "Liberation Sans", Arial, sans-serif; }
.axis.z, .nav.z { fill: #2450b8; }
.axis.x, .nav.x { fill: #b01030; }
.axis.wcs { fill: #1d3a66; }
.wcsbox { fill: none; stroke: #1d3a66; stroke-width: 1.5px; }
.nav { font: 16px "Liberation Sans", Arial, sans-serif; }
.face { font: bold 13px "Open Sans", sans-serif; fill: #666; text-anchor: middle; }

.tube-edge { stroke: #727272; fill: none; }
.tube-mid { stroke: #898989; fill: none; }
.tube-lit { stroke: #9a9a9a; fill: none; }
.rim-fill { fill: #959595; }
.rim-shade { fill: none; stroke: rgba(0, 0, 0, 0.15); stroke-width: 24px; }
.rim-line { fill: none; stroke: #4a4a4a; stroke-width: 2px; }
.lattice { fill: none; stroke: #3a3a3a; stroke-width: 2.6px; }
.lattice-lit { fill: none; stroke: #5e5e5e; stroke-width: 0.7px; }

.dock { width: 395px; }
.pane {
    height: 57px;
    padding-right: 1px;
    display: flex;
    flex-direction: column;
    align-items: flex-end;
}
.pane.line { border-bottom: 1px solid #888; }
.x { width: 28px; line-height: 30px; font-weight: bold; color: #000; }
.scroll { display: flex; height: 25px; border: 1px solid #999; }
.scroll button { width: 19px; font-size: 15px; line-height: 22px; color: #000; }
.scroll button:disabled { color: #888; border-right: 1px solid #999; }

/* Marking toolbar */
.marks {
    height: 34px;
    flex: none;
    display: flex;
    align-items: center;
    background: #fff;
}
.grip-dots { width: 6px; height: 22px; margin-right: 6px; border-right: 2px dotted #222; }
.m {
    width: 31px;
    height: 30px;
    display: flex;
    align-items: center;
    justify-content: center;
}
.m svg { width: 25px; height: 25px; }
.m.on { background: #9ccbf0; }
.caret.lit { height: 30px; align-self: center; background: #cfe5f8; }
.marks .sep { width: 1px; height: 24px; margin: 0 3px; background: #d5d5d5; }

.status {
    height: 21px;
    flex: none;
    padding-left: 6px;
    line-height: 24px;
    background: #2b98fb;
    color: #12345c;
}
.strip { height: 2px; flex: none; background: #07488a; padding-left: 60px; }
.strip i { display: block; width: 360px; height: 2px; background: #9fd2fb; }

/* Fix wizard */
.dialog {
    position: absolute;
    top: 149px;
    right: 29px;
    width: 771px;
    display: flex;
    flex-direction: column;
    background: #f0f0f0;
    border: 1px solid #8a8a8a;
    box-shadow: 2px 4px 14px rgba(0, 0, 0, 0.4);
    color: #222;
}
.dlg-title {
    height: 36px;
    display: flex;
    align-items: center;
    background: #fff;
    padding: 0 20px 2px 10px;
    color: #999;
}
.dlg-title h2 { font-size: 14px; flex: 1; padding-left: 6px; }
.dlg-title > svg { width: 18px; height: 18px; }
.dlg-title button { width: 18px; margin-left: 40px; }
.dlg-title button svg { width: 16px; height: 16px; display: block; fill: none; stroke: #777; }
.dlg-title button:disabled svg { stroke: #ddd; }
.dlg-body { display: flex; padding: 5px 6px 5px 5px; }
.pages {
    width: 152px;
    height: 663px;
    background: #fff;
    border: 3px double #777;
    padding: 0 5px 0 2px;
    font-family: "Open Sans", sans-serif;
}
.page {
    height: 24px;
    display: flex;
    align-items: center;
    font-size: 15px;
    color: #333;
    text-decoration: none;
    white-space: nowrap;
}
.page svg { width: 20px; height: 20px; margin: 0 2px; flex: none; }
.page span { flex: 1; line-height: 24px; }
.page.sel span { background: #f0f0f0; }
.pages hr { height: 24px; margin: 0; border: 0; background: linear-gradient(#777, #777) center / 100% 1px no-repeat; }

.content {
    flex: 1;
    display: flex;
    flex-direction: column;
    padding-left: 9px;
}
.part-row { display: flex; align-items: flex-start; padding-left: 8px; }
.part-row label { width: 91px; line-height: 17px; }
.select { position: relative; flex: 1; }
.select select {
    width: 100%;
    height: 24px;
    appearance: none;
    padding: 2px 3px 0;
    border: 1px solid #aaa;
    border-radius: 0;
    background: #e1e1e1;
    font: inherit;
    color: #333;
}
.select svg { position: absolute; right: 5px; top: 6px; width: 12px; height: 12px; fill: none; stroke: #444; }
.btn {
    height: 31px;
    min-width: 73px;
    border: 1px solid #adadad;
    background: #e1e1e1;
    color: #222;
}
.btn:disabled { background: #cccccc; border-color: #bfbfbf; color: #888; }
.btn.next { min-width: 57px; height: 30px; margin: 1px 0 0 5px; }
.card {
    margin: 9px 4px 0 0;
    padding: 25px 12px 13px;
    border: 1px solid #a5a5a5;
    border-radius: 5px;
    background: linear-gradient(#fff, #f0f0f0);
}
fieldset {
    margin: 0 0 5px;
    padding: 0 12px;
    border: 1px solid #dcdcdc;
    position: relative;
}
legend { padding: 0 4px; margin-left: -8px; line-height: 18px; }
.advice { height: 95px; display: flex; padding-left: 15px; }
.advice legend { margin-left: -11px; }
.advice p { flex: 1; line-height: 17px; padding: 9px 12px 0 0; }
.bar {
    width: 20px;
    height: 57px;
    margin-top: 9px;
    background: #f0f0f0;
    display: flex;
    flex-direction: column;
    justify-content: space-between;
}
.bar svg { width: 10px; height: 10px; fill: none; stroke: #bbb; stroke-width: 2px; }
.diag { margin: 0; padding-bottom: 10px; display: flex; flex-direction: column; }
input[type="checkbox"] {
    appearance: none;
    width: 16px;
    height: 16px;
    margin: 0;
    border: 1px solid #333;
    background: #fff;
}
input[type="checkbox"]:checked::after {
    content: "";
    display: block;
    width: 5px;
    height: 9px;
    margin: 1px 0 0 4px;
    border: solid #444;
    border-width: 0 1px 1px 0;
    transform: rotate(40deg);
}
.full { display: flex; align-items: center; gap: 3px; height: 24px; margin: 7px 0 12px; }
.row { display: flex; align-items: center; height: 25px; padding-left: 25px; }
.row.sub { padding-left: 50px; }
.row svg { width: 17px; height: 17px; margin: 0 8px 0 9px; }
.row b { width: 56px; color: #000; }
.row i { width: 16px; }
.update, .follow {
    display: flex;
    align-items: center;
    padding: 0 8px 0 3px;
}
.update {
    align-self: flex-end;
    width: 139px;
    margin-top: 13px;
}
.btn svg { width: 20px; height: 20px; }
.update svg { --h: #d9a040; }
.btn span { flex: 1; }
.actions { display: flex; gap: 7px; justify-content: flex-end; margin-top: auto; padding-right: 19px; }
.follow { width: 189px; }
.follow:disabled { color: #aaa; text-shadow: 1px 1px 0 #fff; }
.grip { position: absolute; right: 0; bottom: 0; width: 14px; height: 14px; }
```

FILE: script.js
```js
const NS = 'http://www.w3.org/2000/svg';

function add(parent, tag, attrs, text) {
    const el = document.createElementNS(NS, tag);
    for (const key in attrs) el.setAttribute(key, attrs[key]);
    if (text !== undefined) el.textContent = text;
    parent.appendChild(el);
    return el;
}

// Silhouette of the ring
const outline = [
    [640, 259], [617, 264], [587, 278], [553, 293], [520, 308], [487, 317], [453, 328], [430, 335], [407, 352], [390, 373],
    [382, 393], [377, 413], [363, 452], [350, 483], [333, 513], [313, 547], [305, 563], [302, 583], [303, 603],
    [312, 627], [318, 650], [337, 680], [348, 703], [360, 743], [373, 790], [383, 810], [400, 827], [423, 842],
    [450, 849], [477, 857], [517, 873], [550, 888], [583, 905], [610, 915], [633, 918], [657, 915], [683, 903],
    [717, 880], [750, 867], [783, 852], [837, 834], [863, 815], [883, 787], [895, 746], [913, 693], [937, 644],
    [957, 607], [961, 583], [955, 554], [943, 534], [920, 497], [903, 452], [890, 403], [878, 367], [863, 346],
    [843, 337], [810, 329], [783, 320], [750, 309], [717, 293], [683, 275], [660, 262]
];

function smooth(points) {
    const mid = (a, b) => [(a[0] + b[0]) / 2, (a[1] + b[1]) / 2];
    const start = mid(points[points.length - 1], points[0]);
    let d = 'M' + start;
    points.forEach((p, i) => {
        d += 'Q' + p + ' ' + mid(p, points[(i + 1) % points.length]);
    });
    return d + 'Z';
}

function circle(cx, cy, r) {
    return `M${cx - r} ${cy}a${r} ${r} 0 1 0 ${2 * r} 0a${r} ${r} 0 1 0 ${-2 * r} 0Z`;
}

const shape = smooth(outline);
const wheel = document.getElementById('wheel');
const rimInner = circle(634, 593, 282);
const clip = document.getElementById('rimShape');
clip.setAttribute('d', shape + rimInner);
clip.setAttribute('clip-rule', 'evenodd');

function tube(parent, d, width) {
    add(parent, 'path', { d, class: 'tube-edge', 'stroke-width': width });
    add(parent, 'path', { d, class: 'tube-mid', 'stroke-width': width - 2 });
    add(parent, 'path', { d, class: 'tube-lit', 'stroke-width': Math.max(2, width - 7) });
}

// Ring wall seen from inside
const wall = document.getElementById('wall');
add(wall, 'path', { d: circle(634, 593, 283) + circle(631, 588, 277), fill: '#2a2826', 'fill-rule': 'evenodd' });
add(wall, 'path', { d: 'M906 640A281 281 0 0 1 700 862', fill: 'none', stroke: '#77726c', 'stroke-width': 1.5, 'stroke-dasharray': '14 5' });

// Spokes, back rods first
const spokes = document.getElementById('spokes');
for (let i = 0; i < 8; i++) {
    const a = (22.5 + i * 45) * Math.PI / 180;
    const at = r => [631 + r * Math.cos(a), 588 + r * Math.sin(a)];
    const end = [634 + 280 * Math.cos(a), 592 + 280 * Math.sin(a)];
    tube(spokes, `M${at(180)}L${end[0] - 8} ${end[1] - 8}`, 11);
    tube(spokes, `M${at(180)}L${end}`, 14);
    tube(spokes, `M${at(55)}L${at(184)}`, 13);
}
tube(spokes, circle(631, 588, 180), 6);
tube(spokes, circle(631, 588, 51), 15);

add(wheel, 'path', { d: shape + rimInner, class: 'rim-fill', 'fill-rule': 'evenodd' });

// Knurled texture
const mesh = add(wheel, 'g', { 'clip-path': 'url(#rimClip)' });
let lines = '';
for (let k = 0; k < 88; k++) {
    for (const dir of [-1, 1]) {
        for (let r = 280; r <= 340; r += 10) {
            const a = k * Math.PI / 44 + dir * (r - 280) / 270;
            lines += (r === 280 ? 'M' : 'L') + (632 + r * Math.cos(a)).toFixed(1) + ' ' + (590 + r * Math.sin(a)).toFixed(1);
        }
    }
}
add(mesh, 'path', { d: lines, class: 'lattice' });
add(mesh, 'path', { d: lines, class: 'lattice-lit' });
add(mesh, 'path', { d: shape, class: 'rim-shade' });
for (let i = 0; i < 8; i++) {
    const g = add(mesh, 'g', { transform: `rotate(${i * 45} 632 590)` });
    const seam = 'M622 261Q572 268 568 320';
    add(g, 'path', { d: seam, fill: 'none', stroke: '#3a3a3a', 'stroke-width': 13 });
    add(g, 'path', { d: seam, fill: 'none', stroke: '#929292', 'stroke-width': 10 });
    add(g, 'path', { d: seam, fill: 'none', stroke: '#444', 'stroke-width': 1 });
}
add(wheel, 'path', { d: shape, class: 'rim-line' });
tube(wheel, circle(634, 593, 283), 7);

// Ruler, one centimetre is 103.2 units wide
const ruler = document.getElementById('ruler');
for (let i = 0; i <= 142; i++) {
    const x = Math.round(i * 10.32) + 0.5;
    const len = i % 10 === 0 ? 13 : i % 5 === 0 ? 8 : 4;
    add(ruler, 'path', { d: `M${x} 0v${len}` });
    if (i % 10 === 0) add(ruler, 'text', { x: i === 0 ? 7 : x - 1, y: 32 }, i / 10);
}
add(ruler, 'text', { x: 1501, y: 29 }, 'cm');
```
